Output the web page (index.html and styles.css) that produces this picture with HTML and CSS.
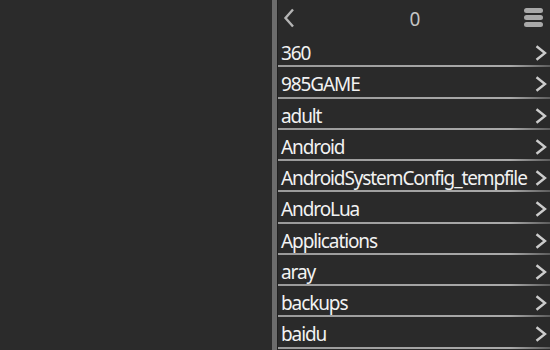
FILE: index.html
```html
<!DOCTYPE html>
<html>
<head>
<meta charset="utf-8">
<link rel="stylesheet" href="styles.css">
</head>
<body>
<div class="app">
  <div class="left"></div>
  <div class="splitter"></div>
  <div class="right">
    <div class="header">
      <svg class="back" width="12" height="20" viewBox="0 0 12 20"><path d="M10 1.5 L2.5 10 L10 18.5" fill="none" stroke="#b4b4b4" stroke-width="2.4"/></svg>
      <div class="count">0</div>
      <div class="menu"><span></span><span></span><span></span></div>
    </div>
    <div class="list">
      <div class="row"><span class="name">360</span><svg class="chev" width="12" height="16" viewBox="0 0 12 16"><path d="M1.5 1.2 L10 8 L1.5 14.8" fill="none" stroke="#cccccc" stroke-width="2.4"/></svg></div>
      <div class="row"><span class="name">985GAME</span><svg class="chev" width="12" height="16" viewBox="0 0 12 16"><path d="M1.5 1.2 L10 8 L1.5 14.8" fill="none" stroke="#cccccc" stroke-width="2.4"/></svg></div>
      <div class="row"><span class="name">adult</span><svg class="chev" width="12" height="16" viewBox="0 0 12 16"><path d="M1.5 1.2 L10 8 L1.5 14.8" fill="none" stroke="#cccccc" stroke-width="2.4"/></svg></div>
      <div class="row"><span class="name">Android</span><svg class="chev" width="12" height="16" viewBox="0 0 12 16"><path d="M1.5 1.2 L10 8 L1.5 14.8" fill="none" stroke="#cccccc" stroke-width="2.4"/></svg></div>
      <div class="row"><span class="name">AndroidSystemConfig_tempfile</span><svg class="chev" width="12" height="16" viewBox="0 0 12 16"><path d="M1.5 1.2 L10 8 L1.5 14.8" fill="none" stroke="#cccccc" stroke-width="2.4"/></svg></div>
      <div class="row"><span class="name">AndroLua</span><svg class="chev" width="12" height="16" viewBox="0 0 12 16"><path d="M1.5 1.2 L10 8 L1.5 14.8" fill="none" stroke="#cccccc" stroke-width="2.4"/></svg></div>
      <div class="row"><span class="name">Applications</span><svg class="chev" width="12" height="16" viewBox="0 0 12 16"><path d="M1.5 1.2 L10 8 L1.5 14.8" fill="none" stroke="#cccccc" stroke-width="2.4"/></svg></div>
      <div class="row"><span class="name">aray</span><svg class="chev" width="12" height="16" viewBox="0 0 12 16"><path d="M1.5 1.2 L10 8 L1.5 14.8" fill="none" stroke="#cccccc" stroke-width="2.4"/></svg></div>
      <div class="row"><span class="name">backups</span><svg class="chev" width="12" height="16" viewBox="0 0 12 16"><path d="M1.5 1.2 L10 8 L1.5 14.8" fill="none" stroke="#cccccc" stroke-width="2.4"/></svg></div>
      <div class="row"><span class="name">baidu</span><svg class="chev" width="12" height="16" viewBox="0 0 12 16"><path d="M1.5 1.2 L10 8 L1.5 14.8" fill="none" stroke="#cccccc" stroke-width="2.4"/></svg></div>
    </div>
  </div>
</div>
</body>
</html>
```
FILE: styles.css
```css
html, body {
  margin: 0;
  padding: 0;
  background: #2a2a2a;
  overflow: hidden;
}
.app {
  display: flex;
  width: 550px;
  height: 350px;
  font-family: "Noto Sans", "Open Sans", sans-serif;
}
.left {
  width: 272px;
  background: #2b2b2b;
}
.splitter {
  width: 5px;
  background: #6c6c6c;
  border-right: 1px solid #1f1f1f;
}
.right {
  flex: 1;
  background: #2a2a2a;
  display: flex;
  flex-direction: column;
  min-width: 0;
}
.header {
  height: 36px;
  display: flex;
  align-items: center;
  padding: 0 7px 0 5px;
}
.back {
  display: block;
  margin-top: 0px;
}
.count {
  flex: 1;
  text-align: center;
  color: #c4c4c4;
  font-size: 19px;
  line-height: 24px;
  padding-top: 2px;
  padding-left: 11px;
}
.menu {
  display: flex;
  flex-direction: column;
  gap: 2px;
  margin-top: -2px;
}
.menu span {
  display: block;
  width: 19px;
  height: 5px;
  border-radius: 2.5px;
  background: #a9a9a9;
}
.list {
  display: flex;
  flex-direction: column;
}
.row {
  height: 29.25px;
  border-bottom: 2px solid #a2a2a2;
  border-image: linear-gradient(to right, #9a9a9a, #aaaaaa 85%, #5a5a5a) 1;
  display: flex;
  align-items: center;
  padding: 0 3px 0 3px;
  box-sizing: content-box;
}
.name {
  flex: 1;
  color: #f2f2f2;
  font-size: 19px;
  letter-spacing: -1.1px;
  white-space: nowrap;
  line-height: 24px;
  padding-top: 5px;
}
.chev {
  display: block;
  flex: none;
  margin-top: 5px;
}
```
